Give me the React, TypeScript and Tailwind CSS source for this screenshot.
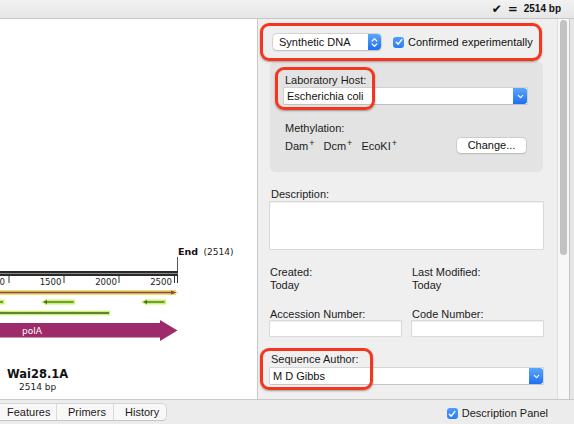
import { ChevronDown } from 'lucide-react'

// small blue mac-style checkbox
function Check() {
  return (
    <span className="flex h-[11px] w-[11px] items-center justify-center rounded-[3px] bg-gradient-to-b from-[#4f9cfb] to-[#2b7cf4]">
      <svg width="8" height="8" viewBox="0 0 8 8">
        <path d="M1.3 4.2 L3.2 6.1 L6.8 1.6" fill="none" stroke="white" strokeWidth="1.5" strokeLinecap="round" strokeLinejoin="round" />
      </svg>
    </span>
  )
}

function Combo({ value, width }: { value: string; width: string }) {
  return (
    <div className={`flex h-[16px] ${width} items-stretch bg-white shadow-[0_0_0_0.5px_#bdbdbd,0_0.5px_1px_rgba(0,0,0,0.15)]`}>
      <div className="flex flex-1 items-center pl-[3px] text-[11px] text-[#111]">{value}</div>
      <div className="flex w-[14px] items-center justify-center rounded-r-[3px] bg-gradient-to-b from-[#5aa6fc] to-[#1f6ef0]">
        <ChevronDown size={9} color="white" strokeWidth={3} />
      </div>
    </div>
  )
}

function Field({ className }: { className: string }) {
  return <div className={`bg-white shadow-[0_0_0_0.5px_#c4c4c4,inset_0_0.5px_1px_rgba(0,0,0,0.12)] ${className}`} />
}

function MapView() {
  const mono = 'DejaVu Sans, Verdana, sans-serif'
  return (
    <svg width="257" height="380" viewBox="0 19 257 380" fontFamily={mono}>
      {/* end marker */}
      <line x1="177.5" y1="257" x2="177.5" y2="272" stroke="#555" strokeWidth="1" />
      <text x="178" y="255" fontSize="9.5" fontWeight="bold" fill="#111">End</text>
      <text x="203.5" y="255" fontSize="9" fill="#222">(2514)</text>

      {/* ruler */}
      <rect x="0" y="271" width="178" height="5" fill="#2b2b2b" />
      <rect x="0" y="273" width="178" height="1" fill="#8a8a8a" />
      {[9, 64, 119, 174.5, 177.5].map((x) => (
        <line key={x} x1={x} y1="276" x2={x} y2="283" stroke="#333" strokeWidth="1" />
      ))}
      {[
        ['0', 5],
        ['1500', 61.5],
        ['2000', 117],
        ['2500', 172],
      ].map(([t, x]) => (
        <text key={t} x={x} y="285" fontSize="8.6" textAnchor="end" fill="#222">{t}</text>
      ))}

      {/* orange feature */}
      <line x1="0" y1="292.5" x2="176" y2="292.5" stroke="#fbd27c" strokeWidth="5" />
      <polygon points="170,289.5 178.5,292.5 170,295.5" fill="#fbd27c" />
      <line x1="0" y1="292.5" x2="172" y2="292.5" stroke="#6c5a36" strokeWidth="1.3" />
      <polygon points="171,290.5 176.5,292.5 171,294.5" fill="#6c5a36" />

      {/* green primers */}
      <line x1="0" y1="302" x2="4.5" y2="302" stroke="#c6f36c" strokeWidth="5" />
      <line x1="0" y1="302" x2="3" y2="302" stroke="#4a6a2a" strokeWidth="1.3" />
      {[
        [42, 75],
        [142, 166],
      ].map(([a, b]) => (
        <g key={a}>
          <line x1={a + 3} y1="302" x2={b} y2="302" stroke="#c6f36c" strokeWidth="5" />
          <polygon points={`${a + 5},298.5 ${a - 1},302 ${a + 5},305.5`} fill="#c6f36c" />
          <line x1={a + 4} y1="302" x2={b - 1.5} y2="302" stroke="#4a6a2a" strokeWidth="1.3" />
          <polygon points={`${a + 5},300 ${a + 1},302 ${a + 5},304`} fill="#4a6a2a" />
        </g>
      ))}
      <line x1="0" y1="313" x2="110" y2="313" stroke="#c6f36c" strokeWidth="4.5" />
      <line x1="0" y1="313" x2="109" y2="313" stroke="#3f5c22" strokeWidth="1.3" />

      {/* polA */}
      <polygon points="0,323 160,323 160,320 177.5,330.5 160,341 160,337.5 0,337.5" fill="#9d2a69" />
      <text x="22" y="333.5" fontSize="9" fill="white">polA</text>

      <text x="7" y="378" fontSize="11.5" fontWeight="bold" fill="#111">Wai28.1A</text>
      <text x="19" y="389.5" fontSize="9" fill="#222">2514 bp</text>
    </svg>
  )
}

function Annot({ className }: { className: string }) {
  return (
    <div
      className={`pointer-events-none absolute rounded-[9px] border-[3px] border-[#f5361c] shadow-[0_1px_2px_rgba(0,0,0,0.35)] ${className}`}
    />
  )
}

export default function App() {
  return (
    <div className="flex h-[424px] w-[574px] flex-col overflow-hidden bg-[#ececec] font-['Liberation_Sans',Arial,sans-serif] text-[11px] leading-[13px] text-[#1b1b1b]">
      {/* top bar */}
      <div className="flex h-[19px] items-center justify-end border-b border-[#c6c6c6] bg-gradient-to-b from-[#f2f2f2] to-[#e6e6e6] pr-[13px] text-[#111]">
        <span className="font-['DejaVu_Sans',sans-serif] text-[12px] leading-none">✔</span>
        <span className="ml-[6px] font-['DejaVu_Sans',sans-serif] text-[12px] font-bold leading-none">=</span>
        <span className="ml-[6px] text-[10px] font-bold leading-none">2514 bp</span>
      </div>

      {/* middle */}
      <div className="flex h-[381px] border-b border-[#c9c9c9]">
        <div className="w-[258px] border-r border-[#c9c9c9] bg-white">
          <MapView />
        </div>

        <div className="relative w-[299px] bg-[#efefef] pl-[12px]">
          {/* type + confirmed */}
          <div className="ml-[3px] mt-[15px] flex items-center">
            <div className="flex h-[16px] w-[108px] items-stretch rounded-[4px] bg-white shadow-[0_0_0_0.5px_#bdbdbd,0_0.5px_1.5px_rgba(0,0,0,0.2)]">
              <div className="flex flex-1 items-center pl-[6px] text-[#111]">Synthetic DNA</div>
              <div className="flex w-[13px] items-center justify-center rounded-r-[4px] bg-gradient-to-b from-[#5aa6fc] to-[#1f6ef0]">
                <svg width="7" height="11" viewBox="0 0 7 11">
                  <path d="M1.2 4 L3.5 1.6 L5.8 4 M1.2 7 L3.5 9.4 L5.8 7" fill="none" stroke="white" strokeWidth="1.2" strokeLinecap="round" strokeLinejoin="round" />
                </svg>
              </div>
            </div>
            <div className="ml-[12px] flex items-center gap-[4px]">
              <Check />
              <span className="text-[#111]">Confirmed experimentally</span>
            </div>
          </div>

          {/* host box */}
          <div className="mt-[12px] h-[110px] w-[273px] rounded-[5px] bg-[#e3e3e3] pl-[14px] pr-[17px] pt-[12px]">
            <div className="pl-[1px]">Laboratory Host:</div>
            <div className="mt-[1px]">
              <Combo value="Escherichia coli" width="w-[243px]" />
            </div>
            <div className="mt-[18px] pl-[1px]">Methylation:</div>
            <div className="mt-[3px] flex h-[15px] items-center justify-between pl-[1px]">
              <div className="flex gap-[9px] pt-[2px]">
                <span>Dam<sup className="ml-[1px] text-[9px]">+</sup></span>
                <span>Dcm<sup className="ml-[1px] text-[9px]">+</sup></span>
                <span>EcoKI<sup className="ml-[1px] text-[9px]">+</sup></span>
              </div>
              <div className="flex h-[15px] w-[69px] items-center justify-center rounded-[4px] bg-white text-[#111] shadow-[0_0_0_0.5px_#bdbdbd,0_0.5px_1.5px_rgba(0,0,0,0.2)]">
                Change...
              </div>
            </div>
          </div>

          <div className="mt-[16px] pl-[1px]">Description:</div>
          <Field className="mt-[1px] h-[47px] w-[273px]" />

          <div className="mt-[17px] grid w-[273px] grid-cols-[142px_1fr]">
            <div>
              <div>Created:</div>
              <div>Today</div>
            </div>
            <div>
              <div>Last Modified:</div>
              <div>Today</div>
            </div>
          </div>

          <div className="mt-[16px] grid w-[273px] grid-cols-[142px_1fr]">
            <div>
              <div>Accession Number:</div>
              <Field className="h-[15px] w-[131px]" />
            </div>
            <div>
              <div>Code Number:</div>
              <Field className="h-[15px] w-[131px]" />
            </div>
          </div>

          <div className="mt-[17px] pl-[1px]">Sequence Author:</div>
          <div className="mt-[2px]">
            <Combo value="M D Gibbs" width="w-[273px]" />
          </div>

          <Annot className="left-[2px] top-[4px] h-[38px] w-[282px]" />
          <Annot className="left-[17px] top-[48px] h-[43px] w-[100px]" />
          <Annot className="left-[2px] top-[329px] h-[42px] w-[113px]" />
        </div>

        {/* scroll bar */}
        <div className="flex w-[12px] justify-center border-l border-[#dedede] bg-[#f7f7f7] pt-[1px]">
          <div className="h-[235px] w-[7px] rounded-full bg-[#c2c2c2]" />
        </div>
        <div className="w-[5px] border-l border-[#c4c4c4] bg-[#e6e6e6]" />
      </div>

      {/* bottom bar */}
      <div className="flex h-[23px] items-start justify-between pr-[26px] pt-[4px]">
        <div className="flex h-[16px] rounded-r-[4px] bg-[#f8f8f8] shadow-[0_0_0_0.5px_#c2c2c2,0_0.5px_1px_rgba(0,0,0,0.15)]">
          <div className="flex w-[57px] items-center border-r border-[#dadada] pl-[7px]">Features</div>
          <div className="flex w-[57px] items-center border-r border-[#dadada] pl-[11px]">Primers</div>
          <div className="flex w-[52px] items-center pl-[11px]">History</div>
        </div>
        <div className="mt-[3px] flex items-center gap-[4px]">
          <Check />
          <span>Description Panel</span>
        </div>
      </div>
    </div>
  )
}
